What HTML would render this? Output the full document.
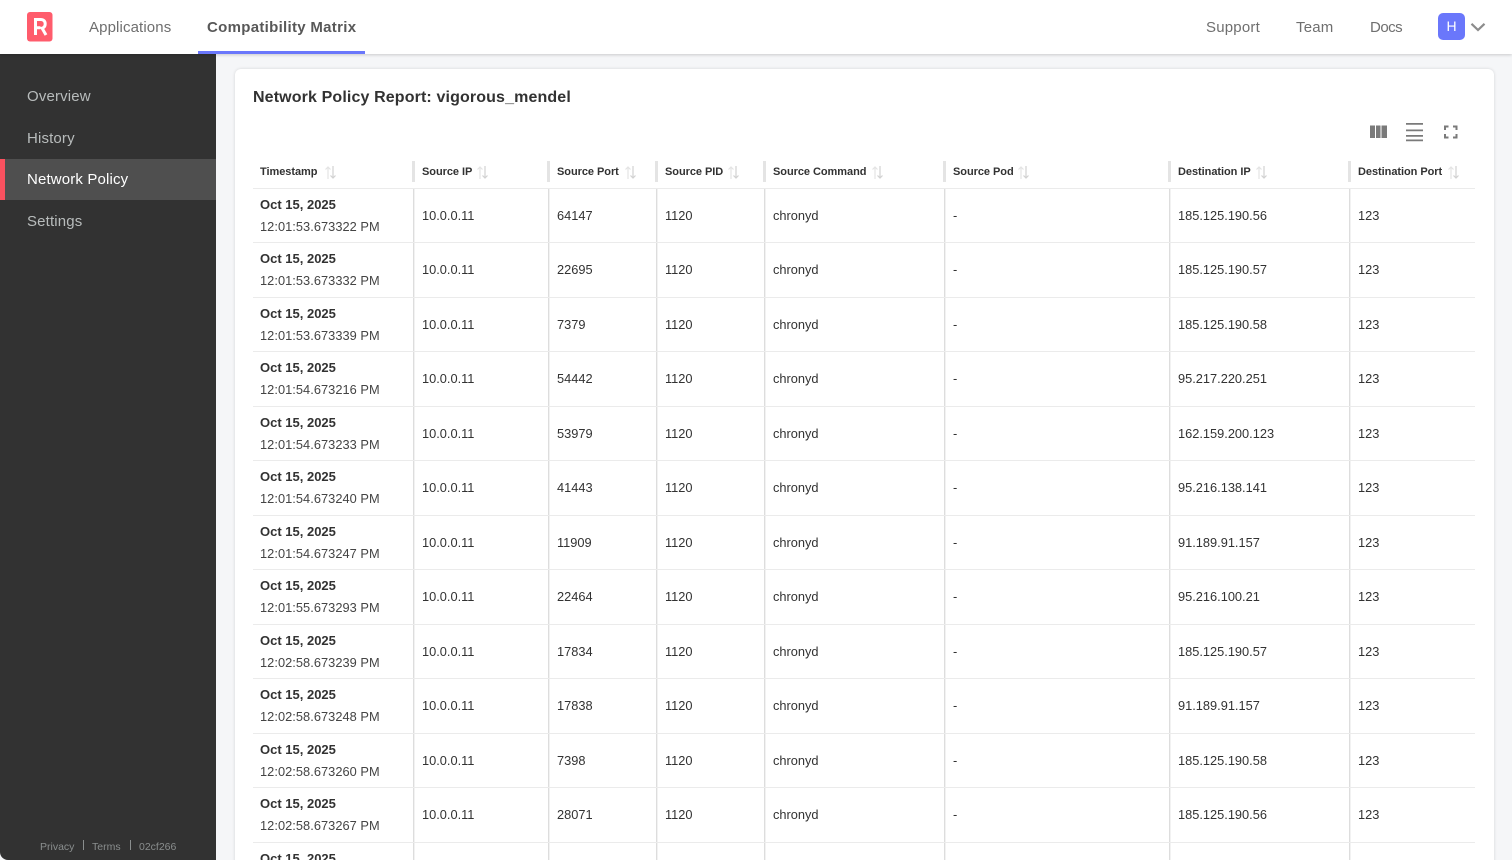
<!DOCTYPE html>
<html><head><meta charset="utf-8"><title>Network Policy</title>
<style>
*{box-sizing:border-box}
html,body{margin:0;padding:0;width:1512px;height:860px;overflow:hidden;background:#f5f6f8;font-family:"Liberation Sans",sans-serif}
#page{position:relative;width:1512px;height:860px;overflow:hidden;background:#f5f6f8}
.a{position:absolute;white-space:nowrap}
#top{position:absolute;left:0;top:0;width:1512px;height:54px;background:#fff;box-shadow:0 1px 3px rgba(0,0,0,.18);z-index:3}
.n{font-size:15px;color:#6f6f6f;top:19px;line-height:17px;letter-spacing:.12px}
#side{position:absolute;left:0;top:54px;width:216px;height:806px;background:#323232;border-bottom-left-radius:8px;z-index:2}
.s{left:27px;font-size:15px;line-height:18px;color:#b8bcbc;letter-spacing:.15px}
.f{font-size:10.5px;color:#8a8e8e;top:841px;line-height:12px;z-index:4}
#card{position:absolute;left:235px;top:69px;width:1259px;height:820px;background:#fff;border-radius:6px;box-shadow:0 0 3px rgba(0,0,0,.14)}
#tbl{position:absolute;left:253px;top:154.5px;width:1222px}
.r{display:grid;grid-template-columns:160px 135px 108px 108px 180px 225px 180px 126px;height:54.5px;border-bottom:1px solid #ebebeb;font-size:12.8px;color:#323232}
.r>div{padding-left:9px;display:flex;align-items:center;white-space:nowrap;background:linear-gradient(to right,#dddddd 1px,#f2f2f2 1px,#f2f2f2 2px,transparent 2px)}
.r>div:first-child{background:none;padding-left:7px;display:block;padding-top:5px;line-height:22px}
.r b{display:block;font-weight:bold;font-size:13px;color:#323232}
.r span{display:block;color:#444;letter-spacing:.05px}
.h{height:34px;font-size:11px;font-weight:bold;letter-spacing:-.05px}
.h>div,.h>div:first-child{background:none;padding:0;position:relative;display:block;line-height:34px}
.h>div:first-child{padding-left:7px}
.h>div:not(:first-child){padding-left:9px}
.h>div:not(:first-child)::before{content:"";position:absolute;left:-1.5px;top:6px;width:3px;height:21px;background:#e4e4e4}
.h svg{position:absolute;top:11px}
</style></head><body>
<div id="page">
<div id="top">
<svg class="a" style="left:27px;top:12px" width="26" height="30" viewBox="0 0 26 30"><rect width="25.5" height="29.5" rx="3" fill="#ff5c6c"/><path d="M8.500 23V7.500h5c3 0 4.700 1.600 4.700 4.400 0 2.300-1.200 3.800-3.100 4.300L19 23M8.500 15.800h5" fill="none" stroke="#fff" stroke-width="3"/></svg>
<div class="a n" style="left:89px">Applications</div>
<div class="a n" style="left:207px;font-weight:bold;color:#585858;letter-spacing:.3px">Compatibility Matrix</div>
<div class="a" style="left:198px;top:51px;width:167px;height:3px;background:#6a77fb"></div>
<div class="a n" style="left:1206px;letter-spacing:.2px">Support</div>
<div class="a n" style="left:1296px;letter-spacing:.2px">Team</div>
<div class="a n" style="left:1370px;letter-spacing:-.5px">Docs</div>
<div class="a" style="left:1438px;top:13px;width:27px;height:27px;border-radius:5px;background:#6a77fb;color:#fff;font-size:14px;line-height:27px;text-align:center">H</div>
<svg class="a" style="left:1470px;top:21px" width="16" height="12" viewBox="0 0 16 12"><path d="M1.500 2.800 8 9l6.500-6.200" fill="none" stroke="#8c8c8c" stroke-width="2.200"/></svg>
</div>
<div id="side">
<div class="a" style="left:0;top:104.500px;width:216px;height:41.500px;background:#4f4f4f"></div>
<div class="a" style="left:0;top:104.500px;width:5px;height:41.500px;background:#f9515f"></div>
</div>
<div class="a s" style="top:88px;z-index:3">Overview</div>
<div class="a s" style="top:130px;z-index:3">History</div>
<div class="a s" style="top:171px;z-index:3;color:#fff">Network Policy</div>
<div class="a s" style="top:213px;z-index:3">Settings</div>
<div class="a f" style="left:40px">Privacy</div>
<div class="a" style="left:83px;top:840px;width:1px;height:10px;background:#8a8e8e;z-index:4"></div>
<div class="a f" style="left:92px">Terms</div>
<div class="a" style="left:130px;top:840px;width:1px;height:10px;background:#8a8e8e;z-index:4"></div>
<div class="a f" style="left:139px">02cf266</div>
<div id="card"></div>
<div class="a" style="left:253px;top:88px;font-size:16px;line-height:20px;font-weight:bold;color:#323232;letter-spacing:.13px">Network Policy Report: vigorous_mendel</div>
<svg class="a" style="left:1368px;top:120px" width="92" height="24" viewBox="0 0 92 24" fill="#7a7a7a"><path d="M2 5.500h5v12.500H2zM8 5.500h4.500v12.500H8zM13.500 5.500H19v12.500h-5.500z"/><path d="M38 3h17v1.700H38zM38 9.500h17v1.700H38zM38 15h17v1.700H38zM38 19.500h17v1.700H38z"/><path d="M76 5.500h4.500v2h-2.500v2.500h-2zM85 5.500h4.500v4.500h-2V7.500H85zM76 14h2v2.500h2.500v2H76zM87.500 14h2v4.500H85v-2h2.500z"/></svg>
<div id="tbl">
<div class="r h"><div>Timestamp<svg style="left:72px" width="11" height="13" viewBox="0 0 11 13"><path d="M3 13V1M.5 3.500 3 1l2.500 2.500" fill="none" stroke="#e4e4e4" stroke-width="1.200"/><path d="M8 0v12M5.500 9.500 8 12l2.500-2.500" fill="none" stroke="#d2d2d2" stroke-width="1.200"/></svg></div><div>Source IP<svg style="left:64px" width="11" height="13" viewBox="0 0 11 13"><path d="M3 13V1M.5 3.500 3 1l2.500 2.500" fill="none" stroke="#e4e4e4" stroke-width="1.200"/><path d="M8 0v12M5.500 9.500 8 12l2.500-2.500" fill="none" stroke="#d2d2d2" stroke-width="1.200"/></svg></div><div>Source Port<svg style="left:77px" width="11" height="13" viewBox="0 0 11 13"><path d="M3 13V1M.5 3.500 3 1l2.500 2.500" fill="none" stroke="#e4e4e4" stroke-width="1.200"/><path d="M8 0v12M5.500 9.500 8 12l2.500-2.500" fill="none" stroke="#d2d2d2" stroke-width="1.200"/></svg></div><div>Source PID<svg style="left:72px" width="11" height="13" viewBox="0 0 11 13"><path d="M3 13V1M.5 3.500 3 1l2.500 2.500" fill="none" stroke="#e4e4e4" stroke-width="1.200"/><path d="M8 0v12M5.500 9.500 8 12l2.500-2.500" fill="none" stroke="#d2d2d2" stroke-width="1.200"/></svg></div><div>Source Command<svg style="left:108px" width="11" height="13" viewBox="0 0 11 13"><path d="M3 13V1M.5 3.500 3 1l2.500 2.500" fill="none" stroke="#e4e4e4" stroke-width="1.200"/><path d="M8 0v12M5.500 9.500 8 12l2.500-2.500" fill="none" stroke="#d2d2d2" stroke-width="1.200"/></svg></div><div>Source Pod<svg style="left:74px" width="11" height="13" viewBox="0 0 11 13"><path d="M3 13V1M.5 3.500 3 1l2.500 2.500" fill="none" stroke="#e4e4e4" stroke-width="1.200"/><path d="M8 0v12M5.500 9.500 8 12l2.500-2.500" fill="none" stroke="#d2d2d2" stroke-width="1.200"/></svg></div><div>Destination IP<svg style="left:87px" width="11" height="13" viewBox="0 0 11 13"><path d="M3 13V1M.5 3.500 3 1l2.500 2.500" fill="none" stroke="#e4e4e4" stroke-width="1.200"/><path d="M8 0v12M5.500 9.500 8 12l2.500-2.500" fill="none" stroke="#d2d2d2" stroke-width="1.200"/></svg></div><div>Destination Port<svg style="left:99px" width="11" height="13" viewBox="0 0 11 13"><path d="M3 13V1M.5 3.500 3 1l2.500 2.500" fill="none" stroke="#e4e4e4" stroke-width="1.200"/><path d="M8 0v12M5.500 9.500 8 12l2.500-2.500" fill="none" stroke="#d2d2d2" stroke-width="1.200"/></svg></div></div>
<div class="r"><div><b>Oct 15, 2025</b><span>12:01:53.673322 PM</span></div><div>10.0.0.11</div><div>64147</div><div>1120</div><div>chronyd</div><div>-</div><div>185.125.190.56</div><div>123</div></div>
<div class="r"><div><b>Oct 15, 2025</b><span>12:01:53.673332 PM</span></div><div>10.0.0.11</div><div>22695</div><div>1120</div><div>chronyd</div><div>-</div><div>185.125.190.57</div><div>123</div></div>
<div class="r"><div><b>Oct 15, 2025</b><span>12:01:53.673339 PM</span></div><div>10.0.0.11</div><div>7379</div><div>1120</div><div>chronyd</div><div>-</div><div>185.125.190.58</div><div>123</div></div>
<div class="r"><div><b>Oct 15, 2025</b><span>12:01:54.673216 PM</span></div><div>10.0.0.11</div><div>54442</div><div>1120</div><div>chronyd</div><div>-</div><div>95.217.220.251</div><div>123</div></div>
<div class="r"><div><b>Oct 15, 2025</b><span>12:01:54.673233 PM</span></div><div>10.0.0.11</div><div>53979</div><div>1120</div><div>chronyd</div><div>-</div><div>162.159.200.123</div><div>123</div></div>
<div class="r"><div><b>Oct 15, 2025</b><span>12:01:54.673240 PM</span></div><div>10.0.0.11</div><div>41443</div><div>1120</div><div>chronyd</div><div>-</div><div>95.216.138.141</div><div>123</div></div>
<div class="r"><div><b>Oct 15, 2025</b><span>12:01:54.673247 PM</span></div><div>10.0.0.11</div><div>11909</div><div>1120</div><div>chronyd</div><div>-</div><div>91.189.91.157</div><div>123</div></div>
<div class="r"><div><b>Oct 15, 2025</b><span>12:01:55.673293 PM</span></div><div>10.0.0.11</div><div>22464</div><div>1120</div><div>chronyd</div><div>-</div><div>95.216.100.21</div><div>123</div></div>
<div class="r"><div><b>Oct 15, 2025</b><span>12:02:58.673239 PM</span></div><div>10.0.0.11</div><div>17834</div><div>1120</div><div>chronyd</div><div>-</div><div>185.125.190.57</div><div>123</div></div>
<div class="r"><div><b>Oct 15, 2025</b><span>12:02:58.673248 PM</span></div><div>10.0.0.11</div><div>17838</div><div>1120</div><div>chronyd</div><div>-</div><div>91.189.91.157</div><div>123</div></div>
<div class="r"><div><b>Oct 15, 2025</b><span>12:02:58.673260 PM</span></div><div>10.0.0.11</div><div>7398</div><div>1120</div><div>chronyd</div><div>-</div><div>185.125.190.58</div><div>123</div></div>
<div class="r"><div><b>Oct 15, 2025</b><span>12:02:58.673267 PM</span></div><div>10.0.0.11</div><div>28071</div><div>1120</div><div>chronyd</div><div>-</div><div>185.125.190.56</div><div>123</div></div>
<div class="r" style="border-bottom:0"><div><b>Oct 15, 2025</b></div><div></div><div></div><div></div><div></div><div></div><div></div><div></div></div>
</div>
</div>
</body></html>
